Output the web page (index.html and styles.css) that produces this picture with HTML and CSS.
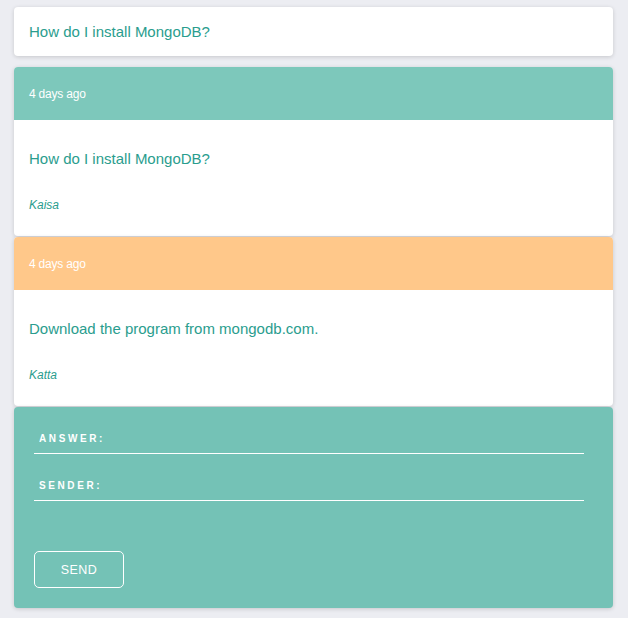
FILE: index.html
```html
<!DOCTYPE html>
<html>
<head>
<meta charset="utf-8">
<link rel="stylesheet" href="styles.css">
</head>
<body>
<div class="page">
  <div class="card question-card">
    <p class="title">How do I install MongoDB?</p>
  </div>
  <div class="card post">
    <div class="post-head teal">4 days ago</div>
    <div class="post-body">
      <p class="title">How do I install MongoDB?</p>
      <p class="author">Kaisa</p>
    </div>
  </div>
  <div class="card post">
    <div class="post-head orange">4 days ago</div>
    <div class="post-body">
      <p class="title">Download the program from mongodb.com.</p>
      <p class="author">Katta</p>
    </div>
  </div>
  <form class="card form-card">
    <label class="field"><input type="text" placeholder="ANSWER:"></label>
    <label class="field"><input type="text" placeholder="SENDER:"></label>
    <button type="button" class="send">SEND</button>
  </form>
</div>
</body>
</html>
```

FILE: styles.css
```css
* { box-sizing: border-box; }
html, body { margin: 0; padding: 0; background: #ecedf2; }
body { font-family: "Liberation Sans", Arial, sans-serif; }
.page {
  display: flex;
  flex-direction: column;
  padding: 7px 15px 10px 14px;
}
.card {
  background: #fff;
  border-radius: 4px;
  box-shadow: 0 1px 4px rgba(0,0,0,0.16);
  overflow: hidden;
}
.title {
  margin: 0;
  color: #2a9d8e;
  font-size: 15px;
  line-height: 18px;
}
.question-card {
  height: 49px;
  display: flex;
  align-items: center;
  padding: 0 15px;
  margin-bottom: 11px;
}
.post { margin-bottom: 1px; }
.post-head {
  height: 53px;
  display: flex;
  align-items: center;
  padding: 0 15px;
  color: #fff;
  font-size: 12px;
  letter-spacing: -0.2px;
}
.teal { background: #7dc8bb; }
.orange { background: #ffc88a; }
.post-body {
  height: 116px;
  padding: 30px 15px 0;
}
.author {
  margin: 30px 0 0;
  color: #2a9d8e;
  font-style: italic;
  font-size: 12px;
  line-height: 14px;
}
.form-card {
  background: #74c2b6;
  height: 201px;
  padding: 17px 29px 0 20px;
  display: flex;
  flex-direction: column;
  align-items: flex-start;
}
.field {
  display: block;
  width: 100%;
  margin-bottom: 17px;
}
.field input {
  width: 100%;
  height: 30px;
  border: 0;
  border-bottom: 1px solid #fff;
  background: transparent;
  padding: 0 5px;
  font-family: "Liberation Sans", Arial, sans-serif;
  font-size: 10px;
  font-weight: bold;
  letter-spacing: 2.6px;
  color: #fff;
  outline: none;
}
.field input::placeholder { color: #fff; opacity: 1; }
.send {
  margin-top: 33px;
  width: 90px;
  height: 37px;
  border: 1px solid #fff;
  border-radius: 5px;
  background: transparent;
  color: #fff;
  font-family: "Liberation Sans", Arial, sans-serif;
  font-size: 12.5px;
  letter-spacing: 0.5px;
}
```
